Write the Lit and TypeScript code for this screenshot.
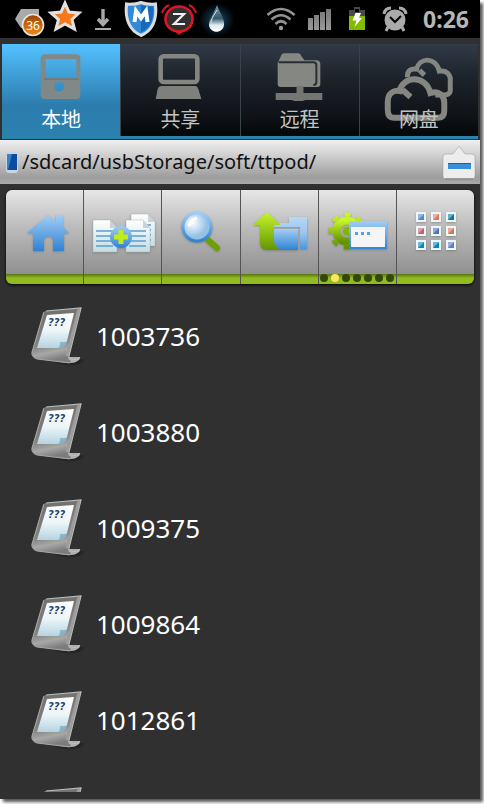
import { LitElement, html, css, svg } from "lit";
import { customElement, property } from "lit/decorators.js";

// An empty name is a row whose entry has not been read yet.
const files = ["1003736", "1003880", "1009375", "1009864", "1012861", ""];

const statusLeft = [
  { box: "10 0 37 38", w: 37, art: svg`
    <path d="M15 19L21 9H39V28H21Z" fill="#a9a9a9"/>
    <circle cx="33" cy="25" r="10.5" fill="url(#or)" stroke="#e4e4e4" stroke-width="1.6"/>
    <defs><linearGradient id="or" x2="0" y2="1"><stop stop-color="#9a4300"/><stop offset="1" stop-color="#f98a10"/></linearGradient></defs>
    <text x="33" y="30" text-anchor="middle" font-size="12" fill="#fff">36</text>` },
  { box: "47 0 38 38", w: 38, art: svg`
    <path d="M65 3L69 12L79 13L72 19.500L74.500 29L65 24L56 29L58.500 19.500L51 13L61 12Z" fill="#f27a1d" stroke="#e2e2e2" stroke-width="3"/>` },
  { box: "85 0 35 38", w: 35, art: svg`
    <path d="M103 9V23M98 19L103 24.500L108 19" fill="none" stroke="#a8a8a8" stroke-width="3.400"/><path d="M95 29H111" stroke="#a8a8a8" stroke-width="2"/>` },
  { box: "120 0 40 38", w: 40, art: svg`
    <path d="M126.500 4Q134 5 141 2.500Q149 5 155.500 4C157 18 154 30 141 35.500C129 30 125 18 126.500 4Z" fill="#3189d8" stroke="#ddd" stroke-width="3"/>
    <path d="M141 5Q147 7 153 6.500C154 18 151 28 141 32Z" fill="#1769bb"/>
    <path d="M134.500 22L136 11L141 18L146 11L147.500 22" fill="none" stroke="#fff" stroke-width="4"/>` },
  { box: "160 0 40 38", w: 40, art: svg`
    <path d="M173 30L179 35L185 30Z" fill="#e01722"/><ellipse cx="179" cy="19" rx="13.500" ry="12.500" fill="#303030" stroke="#e01722" stroke-width="2.600"/>
    <path d="M162 13Q164 7 169 5M196 13Q194 7 189 5" fill="none" stroke="#d01620" stroke-width="2"/>
    <path d="M173 14H184L174 24H185" fill="none" stroke="#f2f2f2" stroke-width="2.200"/>` },
  { box: "200 0 40 38", w: 40, art: svg`
    <defs><radialGradient id="halo"><stop stop-color="#1d4c69"/><stop offset=".6" stop-color="#0a1d2a"/><stop offset="1" stop-color="#000"/></radialGradient>
    <linearGradient id="drop" x2="0" y2="1"><stop stop-color="#829dac"/><stop offset=".5" stop-color="#37576b"/><stop offset=".75" stop-color="#dfeaf0"/><stop offset="1" stop-color="#fff"/></linearGradient></defs>
    <ellipse cx="217" cy="20" rx="18" ry="17" fill="url(#halo)"/><path d="M217 5C219 12 225 18 224 25C223 34 210 34 209 25C209 18 215 12 217 5Z" fill="url(#drop)"/>
    <path d="M217 10C214 15 211 19 211 23" stroke="#dce9ef" fill="none"/>` },
];

const statusRight = [
  { box: "260 0 40 38", w: 40, art: svg`
    <g fill="none" stroke="#929292" stroke-width="2.600"><path d="M266.500 15Q280 3 293.500 15M270.500 19.500Q280 11 289.500 19.500M274.500 24Q280 18.500 285.500 24"/></g><circle cx="280" cy="28" r="2.200" fill="#999"/>` },
  { box: "300 0 40 38", w: 40, art: svg`
    <defs><linearGradient id="sig" x2="0" y2="1"><stop stop-color="#777"/><stop offset="1" stop-color="#999"/></linearGradient></defs>
    <g fill="url(#sig)"><path d="M307 18h5v12h-5zM313 15h5v15h-5zM319 12h5v18h-5zM325 9h5v21h-5z"/></g>` },
  { box: "340 0 34 38", w: 34, art: svg`
    <path d="M348 10h5V7h6v3h5v20h-16z" fill="#4a4a4a"/><path d="M354 9h4v3h-4z" fill="#000"/><path d="M348 16h16v14h-16z" fill="#82bb00"/>
    <path d="M354.500 13H360L358 18H361L353.500 27L355.500 20.500H351.500Z" fill="#fff"/>` },
  { box: "374 0 48 38", w: 48, art: svg`
    <g stroke="#aaa" fill="none" stroke-width="3"><path d="M383 14Q384 8 390 8M405 14Q404 8 398 8M387 27L385 31M401 27L403 31"/></g>
    <circle cx="394" cy="20" r="10.500" fill="#aaa"/><path d="M389 17L394 22L400 16" stroke="#000" stroke-width="2" fill="none"/>` },
];

const tabs = [
  { name: "本地", art: svg`
    <path fill-rule="evenodd" d="M43 10H75Q79 10 79 14V51Q79 55 75 55H43Q39 55 39 51V14Q39 10 43 10ZM44 15V33H75V15ZM60 38A5 5 0 1 0 60 47A5 5 0 0 0 60 38Z" fill="#818888"/>
    <path d="M42 35H77" stroke="#686f70"/>` },
  { name: "共享", art: svg`
    <rect x="40" y="12" width="37" height="26" rx="3" fill="none" stroke="#858681" stroke-width="4.600"/>
    <path d="M40 42H75Q77 42 78 45L81 55H35L37 45Q38 42 40 42Z" fill="#7e807c"/>` },
  { name: "远程", art: svg`
    <path d="M37 19L41 10Q42 9 44 9H58Q60 9 61 12L64 16H77Q80 17 80 20V40Q80 43 77 43H40Q37 43 37 40Z" fill="#858783"/>
    <path d="M38 18H73Q76 18 76 21V38Q76 41 73 41" stroke="#282e34" stroke-width="2" fill="none"/>
    <path d="M56 42H63V49H82V56H65L62 57H54L51 56H35V49H56Z" fill="#737673"/>` },
  { name: "网盘", art: svg`
    <g fill="none" stroke="#858681"><path stroke-width="5" d="M48 33C47 26 52 24 57 25C60 13 76 12 80 27C88 26 92 31 91 38V44Q92 51 85 51H76M60 26L65 31"/>
    <path stroke-width="6" d="M34 74Q28 74 28 66V58C28 49 34 46 40 47C43 32 66 30 71 49C80 46 85 52 85 59V67Q85 74 79 74ZM43 46L51 53"/></g>` },
];

const page = (x: number, y: number) => svg`
  <path d=${`M${x} ${y}h17l7 8v24h-24z`} fill="url(#paper)" stroke="#aab3b6" stroke-width=".5"/>
  <path d=${`M${x + 17} ${y}v8h7z`} fill="#cbd3d6"/>
  <path d=${`M${x + 3} ${y + 11}h17m-17 5h17m-17 5h17m-17 5h17`} stroke="#549ed8" stroke-width="1.500"/>`;

const hues = ["#5388c9", "#dc7a58", "#08789b", "#c3606a", "#4b72ba", "#d17757", "#078bbb", "#0788b4", "#627fbd"];

const tools = [
  { name: "主页", art: svg`<path d="M42 25L50 32V25H57V37L63 43H58V61H47V49Q43 43 38 49V61H27V43H21Z" fill="url(#blue)"/>` },
  { name: "复制", art: svg`${page(47, 24)}${page(9, 30)}${page(42, 30)}
    <circle cx="37" cy="47" r="11" fill="url(#blue)"/><path d="M37 40V54M30 47H44" stroke="#c2ec18" stroke-width="5"/>` },
  { name: "搜索", art: svg`<path d="M45 49L55 58" stroke="#6da100" stroke-width="6" stroke-linecap="round"/><circle cx="35" cy="37" r="14" fill="url(#lens)" stroke="url(#blue)" stroke-width="3"/>
    <path d="M27 36Q28 30 35 28" fill="none" stroke="#fff" stroke-width="3"/>` },
  { name: "上一级", art: svg`<path d="M33 36V33H48V27H66V59H59V37H33Z" fill="url(#tab)"/><path d="M33 39H57V60H40Q33 57 33 51Z" fill="url(#blue)"/>
    <path d="M26 22L40 35H33V51Q33 57 40 60H25Q19 59 19 53V35H12Z" fill="url(#leaf)"/>` },
  { name: "设置", art: svg`<g fill="none" stroke="url(#leaf)"><circle cx="28" cy="41" r="10.500" stroke-width="8"/><circle cx="28" cy="41" r="16" stroke-width="5" stroke-dasharray="6 6.566" stroke-dashoffset="3"/></g><circle cx="28" cy="41" r="4" fill="#83b600"/>
    <rect x="30" y="31" width="38" height="28" fill="url(#blue)"/><rect x="32" y="37" width="34" height="20" fill="#f5f5f5"/>
    <path d="M36 42h3v3h-3zm6 0h3v3h-3zm6 0h3v3h-3z" fill="#55a2e2"/>`, dots: true },
  { name: "视图", art: svg`${hues.map((c, i) => {
    const x = 19 + (i % 3) * 15, y = 22 + Math.floor(i / 3) * 14;
    return svg`<rect x=${x} y=${y} width="10" height="10" fill="#edf6fb"/><rect x=${x + 2} y=${y + 2} width="6" height="6" fill=${c}/><path d=${`M${x + 2} ${y + 8}v-6h6z`} fill="#fff" opacity=".4"/>`;
  })}` },
];

@customElement("file-row")
class FileRow extends LitElement {
  @property() name = "";
  static styles = css`
    :host { display: block; }
    .row { display: flex; align-items: center; gap: 9px; width: 100%; height: 96px; padding: 0 0 0 29px; border: 0; background: none; color: #fff; font: 26px/36px "Noto Sans", "Open Sans", sans-serif; text-align: left; }
    .art { width: 58px; height: 64px; flex: none; }
  `;
  render() {
    return html`<button class="row" aria-label=${this.name || "…"}><svg class="art" viewBox="0 0 58 64" aria-hidden="true">
      <defs><linearGradient id="metal" x2="0.200" y2="1"><stop stop-color="#6c6c6c"/><stop offset=".7" stop-color="#858585"/><stop offset=".85" stop-color="#a8a8a8"/><stop offset="1" stop-color="#7c7c7c"/></linearGradient>
      <linearGradient id="sheet" x2="0" y2="1"><stop stop-color="#fff"/><stop offset=".5" stop-color="#edf5f8"/><stop offset="1" stop-color="#b5d4e2"/></linearGradient>
      <radialGradient id="shade"><stop stop-color="#0c0c0c"/><stop offset="1" stop-color="#303030"/></radialGradient></defs>
      <ellipse cx="40" cy="57" rx="17" ry="5" fill="url(#shade)"/>
      <path d="M39 53L51 53Q52 54 50 56L47 58Q45 59 42 59L30 58Z" fill="#b0b0b0"/>
      <path d="M17 7L52 4L40 52Q39 55 42 56L41 59L8 55Q2 53 3 48L14 9Q15 7 17 7Z" fill="url(#metal)"/>
      <path d="M17 7L52 4L40 52Q39 55 42 56L50 55" fill="none" stroke="#bdbdba" stroke-width="1.200"/>
      <path d="M15 8L3 48Q2 53 8 55L41 59" fill="none" stroke="#aaa9a2"/>
      <path d="M50 5L38 52" stroke="#9d9d9d" stroke-width="3"/>
      <path d="M18 11L45 9L38 37Q36 44 29 44L8 44Z" fill="url(#sheet)"/>
      <path d="M29 44Q32 41 31 38Q35 39 38 37Q36 44 29 44Z" fill="#8ab2c4"/>
      ${this.name ? svg`<text x="19" y="22" font-family="DejaVu Sans" font-weight="700" font-style="italic" font-size="10" fill="#25456f">???</text>` : ""}
    </svg>${this.name ? html`<span>${this.name}</span>` : ""}</button>`;
  }
}

@customElement("app-root")
class AppRoot extends LitElement {
  static styles = css`
    :host { display: block; box-sizing: border-box; height: 100vh; padding: 0 4px 5px 0; overflow: hidden; background: #fff; font-family: "Noto Sans", "Open Sans", "Noto Sans CJK SC", sans-serif; }
    * { box-sizing: border-box; }
    button { border: 0; padding: 0; background: none; font: inherit; }
    svg { display: block; flex: none; }
    .screen { display: flex; flex-direction: column; height: 100%; padding-bottom: 7px; background: #303030; box-shadow: 3px 3px 3px #555; }
    .status { display: flex; height: 38px; padding: 0 11px 0 10px; background: #000; flex: none; }
    .right { display: flex; margin-left: auto; }
    .time { color: #b6b6b6; font-size: 23px; font-weight: 700; line-height: 38px; }
    .tabs { display: flex; flex: none; height: 96px; margin: 6px 2px 0; padding-bottom: 4px; background: linear-gradient(to top, #173c50 1px, #2b82ad 1px, #2b82ad 4px, transparent 4px); }
    .tab { display: grid; flex: 1; height: 92px; justify-items: center; border-left: 1px solid #3b434a; background: linear-gradient(#303a48, #1e242b 35%, #101419 75%, #050708); color: #c3c3c3; }
    .tab.on { height: 95px; border: 0; background: linear-gradient(#53c1ff, #2c7cad 65%, #2b82ad); color: #fff; }
    .tab svg, .tab .label { grid-area: 1 / 1; }
    .tab .label { padding-top: 62px; align-self: start; font: 20px/26px "Noto Sans CJK SC", sans-serif; z-index: 1; }
    .path { display: flex; flex: none; align-items: center; height: 44px; padding: 0 4px 0 5px; background: linear-gradient(#f0f0f0, #d9d9d9 25%, #9d9d9d 85%, #aaa); color: #111; font-size: 20px; line-height: 28px; }
    .path .dir { flex: 1; padding-left: 3px; }
    .tools { display: flex; flex: none; height: 94px; margin: 6px 6px 4px; border-radius: 6px; overflow: hidden; background: linear-gradient(#e6e6e6, #bbb 40%, #909090 84px, #557510 84px, #91bb20 88px, #91bb20); box-shadow: 0 1px 3px #000; }
    .tool { flex: 1; display: flex; justify-content: center; border-right: 1px solid #555; }
    .tool:last-child { border: 0; }
    .art { filter: drop-shadow(0 1px 1px #6668); }
    .list { flex: 1; min-height: 0; margin: 0; padding: 0; overflow: hidden; list-style: none; }
  `;
  render() {
    const cell = (s: { box: string; w: number; art: unknown }) => html`<svg width=${s.w} height="38" viewBox=${s.box} aria-hidden="true">${s.art}</svg>`;
    return html`<main class="screen">
      <header class="status">${statusLeft.map(cell)}<div class="right">${statusRight.map(cell)}<span class="time">0:26</span></div></header>
      <nav class="tabs">${tabs.map((t, i) => html`<button class=${i ? "tab" : "tab on"}>
        <svg width="118" height="92" viewBox="0 0 119 92" aria-hidden="true">${t.art}</svg><span class="label">${t.name}</span></button>`)}</nav>
      <div class="path">
        <svg width="14" height="24" viewBox="0 0 14 24" aria-hidden="true"><rect x="1" y="2" width="12" height="21" rx="3" fill="#c9d6e0"/><path d="M2 4H12V20H2Z" fill="#0b4ba0"/><path d="M2 4H7L3 20H2Z" fill="#3d80c8"/></svg>
        <span class="dir">/sdcard/usbStorage/soft/ttpod/</span>
        <button aria-label="收起"><svg width="34" height="38" viewBox="0 0 34 38">
          <path d="M4 11H11L17 3L23 11H30Q33 11 33 14V33Q33 36 30 36H4Q1 36 1 33V14Q1 11 4 11Z" fill="#ededed" stroke="#999" stroke-width=".5"/>
          <path d="M3 36H31" stroke="#888" stroke-width="1.500"/><path d="M6 20H29V26H6Z" fill="#3a8fd9"/><path d="M6 20H29V21H6Z" fill="#555"/></svg></button>
      </div>
      <div class="tools">${tools.map((t) => html`<button class="tool" aria-label=${t.name}>
        <svg width="77" height="94" viewBox="0 0 77 94">
          <defs><linearGradient id="blue" x2="0" y2="1"><stop stop-color="#a2cdf5"/><stop offset="1" stop-color="#2e83d4"/></linearGradient>
          <linearGradient id="tab" x2="0" y2="1"><stop stop-color="#b5d8f8"/><stop offset=".5" stop-color="#9ac6ef"/><stop offset="1" stop-color="#4c96dc"/></linearGradient>
          <linearGradient id="leaf" x2="0" y2="1"><stop stop-color="#caf52a"/><stop offset=".5" stop-color="#94c516"/><stop offset="1" stop-color="#659400"/></linearGradient>
          <linearGradient id="paper" x2="0" y2="1"><stop stop-color="#fff"/><stop offset="1" stop-color="#c5dcdf"/></linearGradient>
          <radialGradient id="lens" cx=".35" cy=".35"><stop stop-color="#fff"/><stop offset="1" stop-color="#96c1e7"/></radialGradient></defs>
          <g class="art">${t.art}</g>
          ${t.dots ? [0, 1, 2, 3, 4, 5, 6].map((n) => svg`<circle cx=${5 + n * 11} cy="88" r="4" fill=${n === 1 ? "#fbe75f" : "#35480c"}/>`) : ""}
        </svg></button>`)}</div>
      <ul class="list">${files.map((f) => html`<li><file-row name=${f}></file-row></li>`)}</ul>
    </main>`;
  }
}
